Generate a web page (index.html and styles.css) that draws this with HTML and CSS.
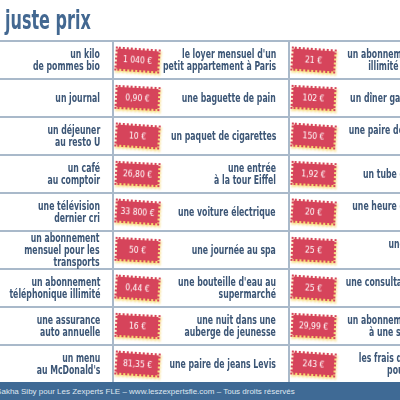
FILE: index.html
```html
<!DOCTYPE html>
<html lang="fr">
<head>
    <meta charset="UTF-8">
    <meta name="viewport" content="width=device-width, initial-scale=1.0">
    <title>Le juste prix</title>
    <link rel="stylesheet" href="styles.css">
</head>
<body>
    <div class="sheet">
        <h1 class="title"><span class="txt">juste prix</span></h1>

        <div class="grid">
            <div class="row">
                <div class="item"><span class="txt">un kilo<br>de pommes bio</span></div>
                <div class="price"><span class="tag">1 040 €</span></div>
                <div class="item"><span class="txt">le loyer mensuel d'un<br>petit appartement à Paris</span></div>
                <div class="price"><span class="tag">21 €</span></div>
                <div class="item item-last"><span class="txt">un abonnement mensuel<br>illimité aux cinémas</span></div>
            </div>
            <div class="row">
                <div class="item"><span class="txt">un journal</span></div>
                <div class="price"><span class="tag">0,90 €</span></div>
                <div class="item"><span class="txt">une baguette de pain</span></div>
                <div class="price"><span class="tag">102 €</span></div>
                <div class="item item-last"><span class="txt">un dîner gastronomique</span></div>
            </div>
            <div class="row">
                <div class="item"><span class="txt">un déjeuner<br>au resto U</span></div>
                <div class="price"><span class="tag">10 €</span></div>
                <div class="item"><span class="txt">un paquet de cigarettes</span></div>
                <div class="price"><span class="tag">150 €</span></div>
                <div class="item item-last"><span class="txt">une paire de chaussures<br>de sport</span></div>
            </div>
            <div class="row">
                <div class="item"><span class="txt">un café<br>au comptoir</span></div>
                <div class="price"><span class="tag">26,80 €</span></div>
                <div class="item"><span class="txt">une entrée<br>à la tour Eiffel</span></div>
                <div class="price"><span class="tag">1,92 €</span></div>
                <div class="item item-last"><span class="txt">un tube de dentifrice</span></div>
            </div>
            <div class="row">
                <div class="item"><span class="txt">une télévision<br>dernier cri</span></div>
                <div class="price"><span class="tag">33 800 €</span></div>
                <div class="item"><span class="txt">une voiture électrique</span></div>
                <div class="price"><span class="tag">20 €</span></div>
                <div class="item item-last"><span class="txt">une heure de ménage à<br>domicile</span></div>
            </div>
            <div class="row">
                <div class="item"><span class="txt">un abonnement<br>mensuel pour les<br>transports</span></div>
                <div class="price"><span class="tag">50 €</span></div>
                <div class="item"><span class="txt">une journée au spa</span></div>
                <div class="price"><span class="tag">25 €</span></div>
                <div class="item item-last"><span class="txt">une coupe chez<br>le coiffeur</span></div>
            </div>
            <div class="row">
                <div class="item"><span class="txt">un abonnement<br>téléphonique illimité</span></div>
                <div class="price"><span class="tag">0,44 €</span></div>
                <div class="item"><span class="txt">une bouteille d'eau au<br>supermarché</span></div>
                <div class="price"><span class="tag">25 €</span></div>
                <div class="item item-last"><span class="txt">une consultation chez un<br>médecin</span></div>
            </div>
            <div class="row">
                <div class="item"><span class="txt">une assurance<br>auto annuelle</span></div>
                <div class="price"><span class="tag">16 €</span></div>
                <div class="item"><span class="txt">une nuit dans une<br>auberge de jeunesse</span></div>
                <div class="price"><span class="tag">29,99 €</span></div>
                <div class="item item-last"><span class="txt">un abonnement mensuel<br>à une salle de sport</span></div>
            </div>
            <div class="row">
                <div class="item"><span class="txt">un menu<br>au McDonald's</span></div>
                <div class="price"><span class="tag">81,35 €</span></div>
                <div class="item"><span class="txt">une paire de jeans Levis</span></div>
                <div class="price"><span class="tag">243 €</span></div>
                <div class="item item-last"><span class="txt">les frais de scolarité à<br>pour une année</span></div>
            </div>
        </div>

        <footer class="footer">© Sakha Siby pour Les Zexperts FLE – www.leszexpertsfle.com – Tous droits réservés</footer>
    </div>
</body>
</html>
```

FILE: styles.css
```css
* {
    margin: 0;
    padding: 0;
    box-sizing: border-box;
}

body {
    font-family: "DejaVu Sans Condensed", "DejaVu Sans", sans-serif;
    background-color: #ffffff;
    overflow: hidden;
    width: 400px;
    height: 400px;
}

/* The sheet is wider than the window: it is cropped on both sides */
.sheet {
    width: 520px;
    margin-left: -40px;
}

/* condensed lettering */
.txt {
    display: block;
    white-space: nowrap;
    transform: scaleX(0.72);
    transform-origin: right center;
}

.title {
    height: 40px;
    padding: 5px 0 0 45px;
    font-size: 27px;
    font-weight: bold;
    color: #436891;
    line-height: 30px;
}

.title .txt {
    display: inline-block;
    transform: scaleX(0.66);
    transform-origin: left center;
}

/* Rows */
.row {
    display: grid;
    grid-template-columns: 152px 48px 128px 48px 120px;
    height: 38px;
    border-top: 2px solid #a9b9ca;
}

.item {
    display: flex;
    align-items: center;
    justify-content: flex-end;
    padding-right: 12px;
    text-align: right;
    font-size: 12px;
    font-weight: bold;
    line-height: 12px;
    color: #3c5676;
}

.item-last {
    padding-right: 0;
}

.price {
    display: flex;
    align-items: center;
    justify-content: center;
    border-left: 2px solid #a9b9ca;
}

/* Perforated stamp */
.tag {
    display: block;
    width: 45px;
    height: 24px;
    background: #d6445b;
    background-clip: padding-box;
    border: 2px dotted #d6445b;
    color: #ffffff;
    font-size: 8.5px;
    line-height: 20px;
    text-align: center;
    white-space: nowrap;
    transform: rotate(4deg);
    filter: drop-shadow(1.5px 2px 1px #f6d25e);
}

.row:nth-child(2n) .tag {
    transform: rotate(3deg);
}

/* Footer */
.footer {
    height: 20px;
    padding-left: 28px;
    background: #3f6a95;
    color: #dfe8f1;
    font-family: "Liberation Sans", sans-serif;
    font-size: 8px;
    line-height: 20px;
    white-space: nowrap;
}
```
